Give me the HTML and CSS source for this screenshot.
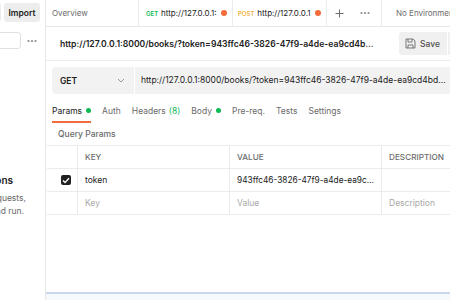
FILE: index.html
```html
<!DOCTYPE html>
<html>
<head>
<meta charset="utf-8">
<link rel="stylesheet" href="styles.css">
</head>
<body>
<div class="app">
  <aside class="sidebar">
    <div class="side-top">
      <span class="btn-new"></span>
      <span class="btn-import">Import</span>
    </div>
    <div class="side-search">
      <span class="search-box"></span>
      <svg class="dots" width="10" height="4" viewBox="0 0 10 4"><circle cx="1.5" cy="2" r="1.1"/><circle cx="5" cy="2" r="1.1"/><circle cx="8.5" cy="2" r="1.1"/></svg>
    </div>
    <div class="empty">
      <div class="empty-line empty-head"><span>You don't have any collections</span></div>
      <div class="empty-line empty-l1"><span>Collections let you group related requests,</span></div>
      <div class="empty-line empty-l2"><span>making them easier to access and run.</span></div>
    </div>
  </aside>
  <main class="main">
    <div class="tabbar">
      <div class="tab tab-overview">Overview</div>
      <div class="tab tab-get"><span class="m-get">GET</span><span class="tab-url">http://127.0.0.1:</span><span class="dot-orange"></span></div>
      <div class="tab tab-post"><span class="m-post">POST</span><span class="tab-url">http://127.0.0.1</span><span class="dot-orange"></span></div>
      <div class="tab-actions">
        <svg width="9" height="9" viewBox="0 0 9 9"><path d="M4.5 0.5v8M0.5 4.5h8" stroke="#6b6b6b" stroke-width="1" fill="none"/></svg>
        <svg class="dots" width="10" height="4" viewBox="0 0 10 4"><circle cx="1.5" cy="2" r="1.1"/><circle cx="5" cy="2" r="1.1"/><circle cx="8.5" cy="2" r="1.1"/></svg>
      </div>
      <div class="env">No Environment</div>
    </div>
    <div class="titlebar">
      <div class="title">http://127.0.0.1:8000/books/?token=943ffc46-3826-47f9-a4de-ea9cd4bd2a1f</div>
      <div class="save-group">
        <div class="save-main">
          <svg width="11" height="11" viewBox="0 0 11 11"><path d="M1 1h7l2 2v7H1z" stroke="#6b6b6b" stroke-width="0.9" fill="none"/><path d="M3 1v3h4V1M3 10V7h5v3" stroke="#6b6b6b" stroke-width="0.9" fill="none"/></svg>
          <span>Save</span>
        </div>
        <div class="save-more">
          <svg width="8" height="5" viewBox="0 0 8 5"><path d="M1 1l3 3 3-3" stroke="#6b6b6b" stroke-width="1" fill="none"/></svg>
        </div>
      </div>
    </div>
    <div class="urlrow">
      <div class="method">
        <span>GET</span>
        <svg width="8" height="5" viewBox="0 0 8 5"><path d="M1 1l3 3 3-3" stroke="#8a8a8a" stroke-width="0.9" fill="none"/></svg>
      </div>
      <div class="urlinput">http://127.0.0.1:8000/books/?token=943ffc46-3826-47f9-a4de-ea9cd4bd2a1f</div>
    </div>
    <div class="reqtabs">
      <div class="rtab active">Params<span class="dot-green"></span></div>
      <div class="rtab">Auth</div>
      <div class="rtab">Headers <span class="green">(8)</span></div>
      <div class="rtab">Body<span class="dot-green"></span></div>
      <div class="rtab">Pre-req.</div>
      <div class="rtab">Tests</div>
      <div class="rtab">Settings</div>
    </div>
    <div class="qp-title">Query Params</div>
    <div class="ptable">
      <div class="prow phead">
        <div class="c c-check"></div>
        <div class="c c-key">KEY</div>
        <div class="c c-val">VALUE</div>
        <div class="c c-desc">DESCRIPTION</div>
      </div>
      <div class="prow">
        <div class="c c-check"><span class="checkbox"><svg width="8" height="7" viewBox="0 0 8 7"><path d="M1 3.6l2 2 4-4.4" stroke="#fff" stroke-width="1.4" fill="none"/></svg></span></div>
        <div class="c c-key">token</div>
        <div class="c c-val"><span class="ell">943ffc46-3826-47f9-a4de-ea9cd4bd2a1f</span></div>
        <div class="c c-desc"></div>
      </div>
      <div class="prow">
        <div class="c c-check"></div>
        <div class="c c-key ph">Key</div>
        <div class="c c-val ph">Value</div>
        <div class="c c-desc ph">Description</div>
      </div>
    </div>
    <div class="spacer"></div>
    <div class="resp-bar"></div>
  </main>
</div>
</body>
</html>
```
FILE: styles.css
```css
* { box-sizing: border-box; }
html, body { margin: 0; padding: 0; }
body {
  font-family: Inter, "Noto Sans", sans-serif;
  font-size: 8.5px;
  color: #212121;
  background: #fff;
}
.app { display: flex; width: 450px; height: 300px; overflow: hidden; }

.sidebar {
  width: 46px;
  flex-shrink: 0;
  border-right: 1px solid #e8e8e8;
  overflow: hidden;
  display: flex;
  flex-direction: column;
}
.side-top {
  display: flex;
  justify-content: flex-end;
  gap: 3px;
  padding: 3px 5px 0 0;
  height: 22px;
}
.btn-new { width: 20px; height: 19px; flex-shrink: 0; background: #ededed; border-radius: 3px; }
.btn-import {
  flex-shrink: 0;
  width: 36px; height: 19px;
  background: #ededed;
  border-radius: 3px;
  font-weight: 600;
  font-size: 8.5px;
  display: flex; align-items: center; justify-content: center;
  color: #212121;
}
.side-search {
  display: flex;
  justify-content: flex-end;
  align-items: center;
  gap: 6px;
  padding-right: 8px;
  margin-top: 10px;
}
.search-box {
  flex-shrink: 0;
  width: 60px; height: 17px;
  border: 1px solid #e0e0e0;
  border-radius: 3px;
}
.dots { fill: #8a8a8a; flex-shrink: 0; }
.empty { margin-top: 125px; }
.empty-line { display: flex; justify-content: flex-end; white-space: nowrap; }
.empty-line span { flex-shrink: 0; }
.empty-head { font-weight: 600; font-size: 10px; padding-right: 32px; height: 12px; line-height: 12px; }
.empty-l1, .empty-l2 { color: #6b6b6b; font-size: 8.5px; line-height: 13px; }
.empty-l1 { margin-top: 6px; padding-right: 19px; }
.empty-l2 { padding-right: 21px; }

.main {
  flex: 1;
  min-width: 0;
  display: flex;
  flex-direction: column;
  overflow: hidden;
}
.tabbar {
  height: 27px;
  flex-shrink: 0;
  border-bottom: 1px solid #e8e8e8;
  display: flex;
  align-items: stretch;
  white-space: nowrap;
  font-size: 8px;
}
.tab {
  display: flex;
  align-items: center;
  border-right: 1px solid #ececec;
  flex-shrink: 0;
  overflow: hidden;
}
.tab-overview { width: 93px; padding-left: 6px; color: #6b6b6b; }
.tab-get { width: 94px; padding-left: 7px; }
.tab-post { width: 94px; padding-left: 5px; }
.m-get { color: #0cbb52; font-size: 6px; font-weight: 600; margin-right: 3px; }
.m-post { color: #f4b343; font-size: 6px; font-weight: 600; margin-right: 3px; }
.tab-url { color: #212121; }
.dot-orange { width: 6px; height: 6px; border-radius: 50%; background: #f26b3a; margin-left: 4px; flex-shrink: 0; }
.tab-actions {
  display: flex;
  align-items: center;
  gap: 16px;
  padding-left: 8px;
  width: 55px;
  border-right: 1px solid #ececec;
  flex-shrink: 0;
}
.env { display: flex; align-items: center; padding-left: 14px; color: #6b6b6b; }

.titlebar {
  height: 34px;
  flex-shrink: 0;
  border-bottom: 1px solid #ececec;
  display: flex;
  align-items: center;
  padding-left: 14px;
}
.title {
  flex: 1;
  min-width: 0;
  font-weight: 600;
  font-size: 8.6px;
  white-space: nowrap;
  overflow: hidden;
  text-overflow: ellipsis;
  margin-right: 22px;
}
.save-group { display: flex; gap: 1px; flex-shrink: 0; margin-right: -20px; }
.save-main {
  width: 48px; height: 23px;
  background: #f0f0f0;
  border-radius: 3px 0 0 3px;
  display: flex; align-items: center;
  padding-left: 6px; gap: 4px;
  color: #505050;
  font-weight: 500;
}
.save-more {
  width: 22px; height: 23px;
  background: #f0f0f0;
  display: flex; align-items: center; justify-content: center;
}

.urlrow {
  display: flex;
  padding: 6px 0 0 6px;
  height: 33px;
  flex-shrink: 0;
  gap: 1px;
}
.method {
  width: 82px;
  height: 27px;
  background: #f2f2f2;
  border-radius: 4px 0 0 4px;
  display: flex;
  align-items: center;
  justify-content: space-between;
  padding: 0 9px 0 8px;
  font-weight: 600;
  flex-shrink: 0;
}
.urlinput {
  flex: 1;
  min-width: 0;
  height: 27px;
  background: #f2f2f2;
  padding-left: 6px;
  white-space: nowrap;
  overflow: hidden;
  text-overflow: ellipsis;
  display: block;
  line-height: 27px;
}

.reqtabs {
  display: flex;
  gap: 11px;
  padding-left: 6px;
  margin-top: 6px;
  height: 23px;
  flex-shrink: 0;
}
.rtab {
  display: flex;
  align-items: center;
  color: #6b6b6b;
  border-bottom: 2px solid transparent;
  white-space: nowrap;
}
.rtab.active { color: #212121; border-bottom-color: #f26b3a; }
.dot-green { width: 5px; height: 5px; border-radius: 50%; background: #0cbb52; margin-left: 4px; }
.green { color: #0cbb52; margin-left: 3px; }

.qp-title {
  padding-left: 12px;
  color: #6b6b6b;
  font-weight: 500;
  height: 22px;
  line-height: 22px;
  flex-shrink: 0;
}
.ptable { border-top: 1px solid #ebebeb; margin-left: 1px; flex-shrink: 0; }
.prow { display: flex; height: 23px; border-bottom: 1px solid #ebebeb; }
.c {
  display: flex;
  align-items: center;
  border-right: 1px solid #ebebeb;
  padding-left: 7px;
  white-space: nowrap;
  overflow: hidden;
  flex-shrink: 0;
}
.c-check { width: 31px; justify-content: flex-end; padding-right: 6px; }
.c-key { width: 152px; }
.c-val { width: 152px; padding-right: 6px; }
.c-val .ell { font-size: 8.3px; }
.c-desc { flex: 1; border-right: none; flex-shrink: 1; }
.phead .c { color: #6b6b6b; font-weight: 500; font-size: 8.2px; }
.ph { color: #a8a8a8; }
.ell { overflow: hidden; text-overflow: ellipsis; }
.checkbox {
  width: 10px; height: 10px;
  background: #212121;
  border-radius: 2px;
  display: flex; align-items: center; justify-content: center;
}
.spacer { flex: 1; }
.resp-bar {
  height: 8px;
  flex-shrink: 0;
  border-top: 2px solid #c8d7ec;
  background: #f5f8fc;
}
```
